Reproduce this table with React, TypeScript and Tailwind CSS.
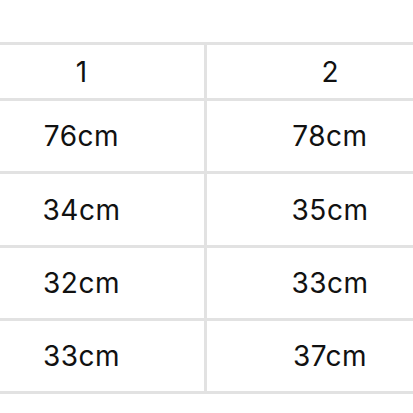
export default function App() {
  const rows = [
    ["76cm", "78cm"],
    ["34cm", "35cm"],
    ["32cm", "33cm"],
    ["33cm", "37cm"],
  ]

  return (
    <div className="w-[413px] h-[413px] bg-white overflow-hidden pt-[42px] font-['Inter','Liberation_Sans',sans-serif] text-[#111]">
      <div className="w-[494px] ml-[-41px] border-b-[3px] border-[#e2e2e2]">
        <div className="flex h-[56px] border-t-[3px] border-[#e2e2e2] text-[28px]">
          <div className="w-[245px] flex items-center justify-center">1</div>
          <div className="flex-1 flex items-center justify-center border-l-[3px] border-[#e2e2e2]">2</div>
        </div>
        {rows.map((r, i) => (
          <div key={i} className={`flex border-t-[3px] border-[#e2e2e2] text-[28px] tracking-[0.5px] ${i === 1 ? "h-[74px]" : "h-[73px]"}`}>
            <div className="w-[245px] flex items-center justify-center">{r[0]}</div>
            <div className="flex-1 flex items-center justify-center border-l-[3px] border-[#e2e2e2]">{r[1]}</div>
          </div>
        ))}
      </div>
    </div>
  )
}
